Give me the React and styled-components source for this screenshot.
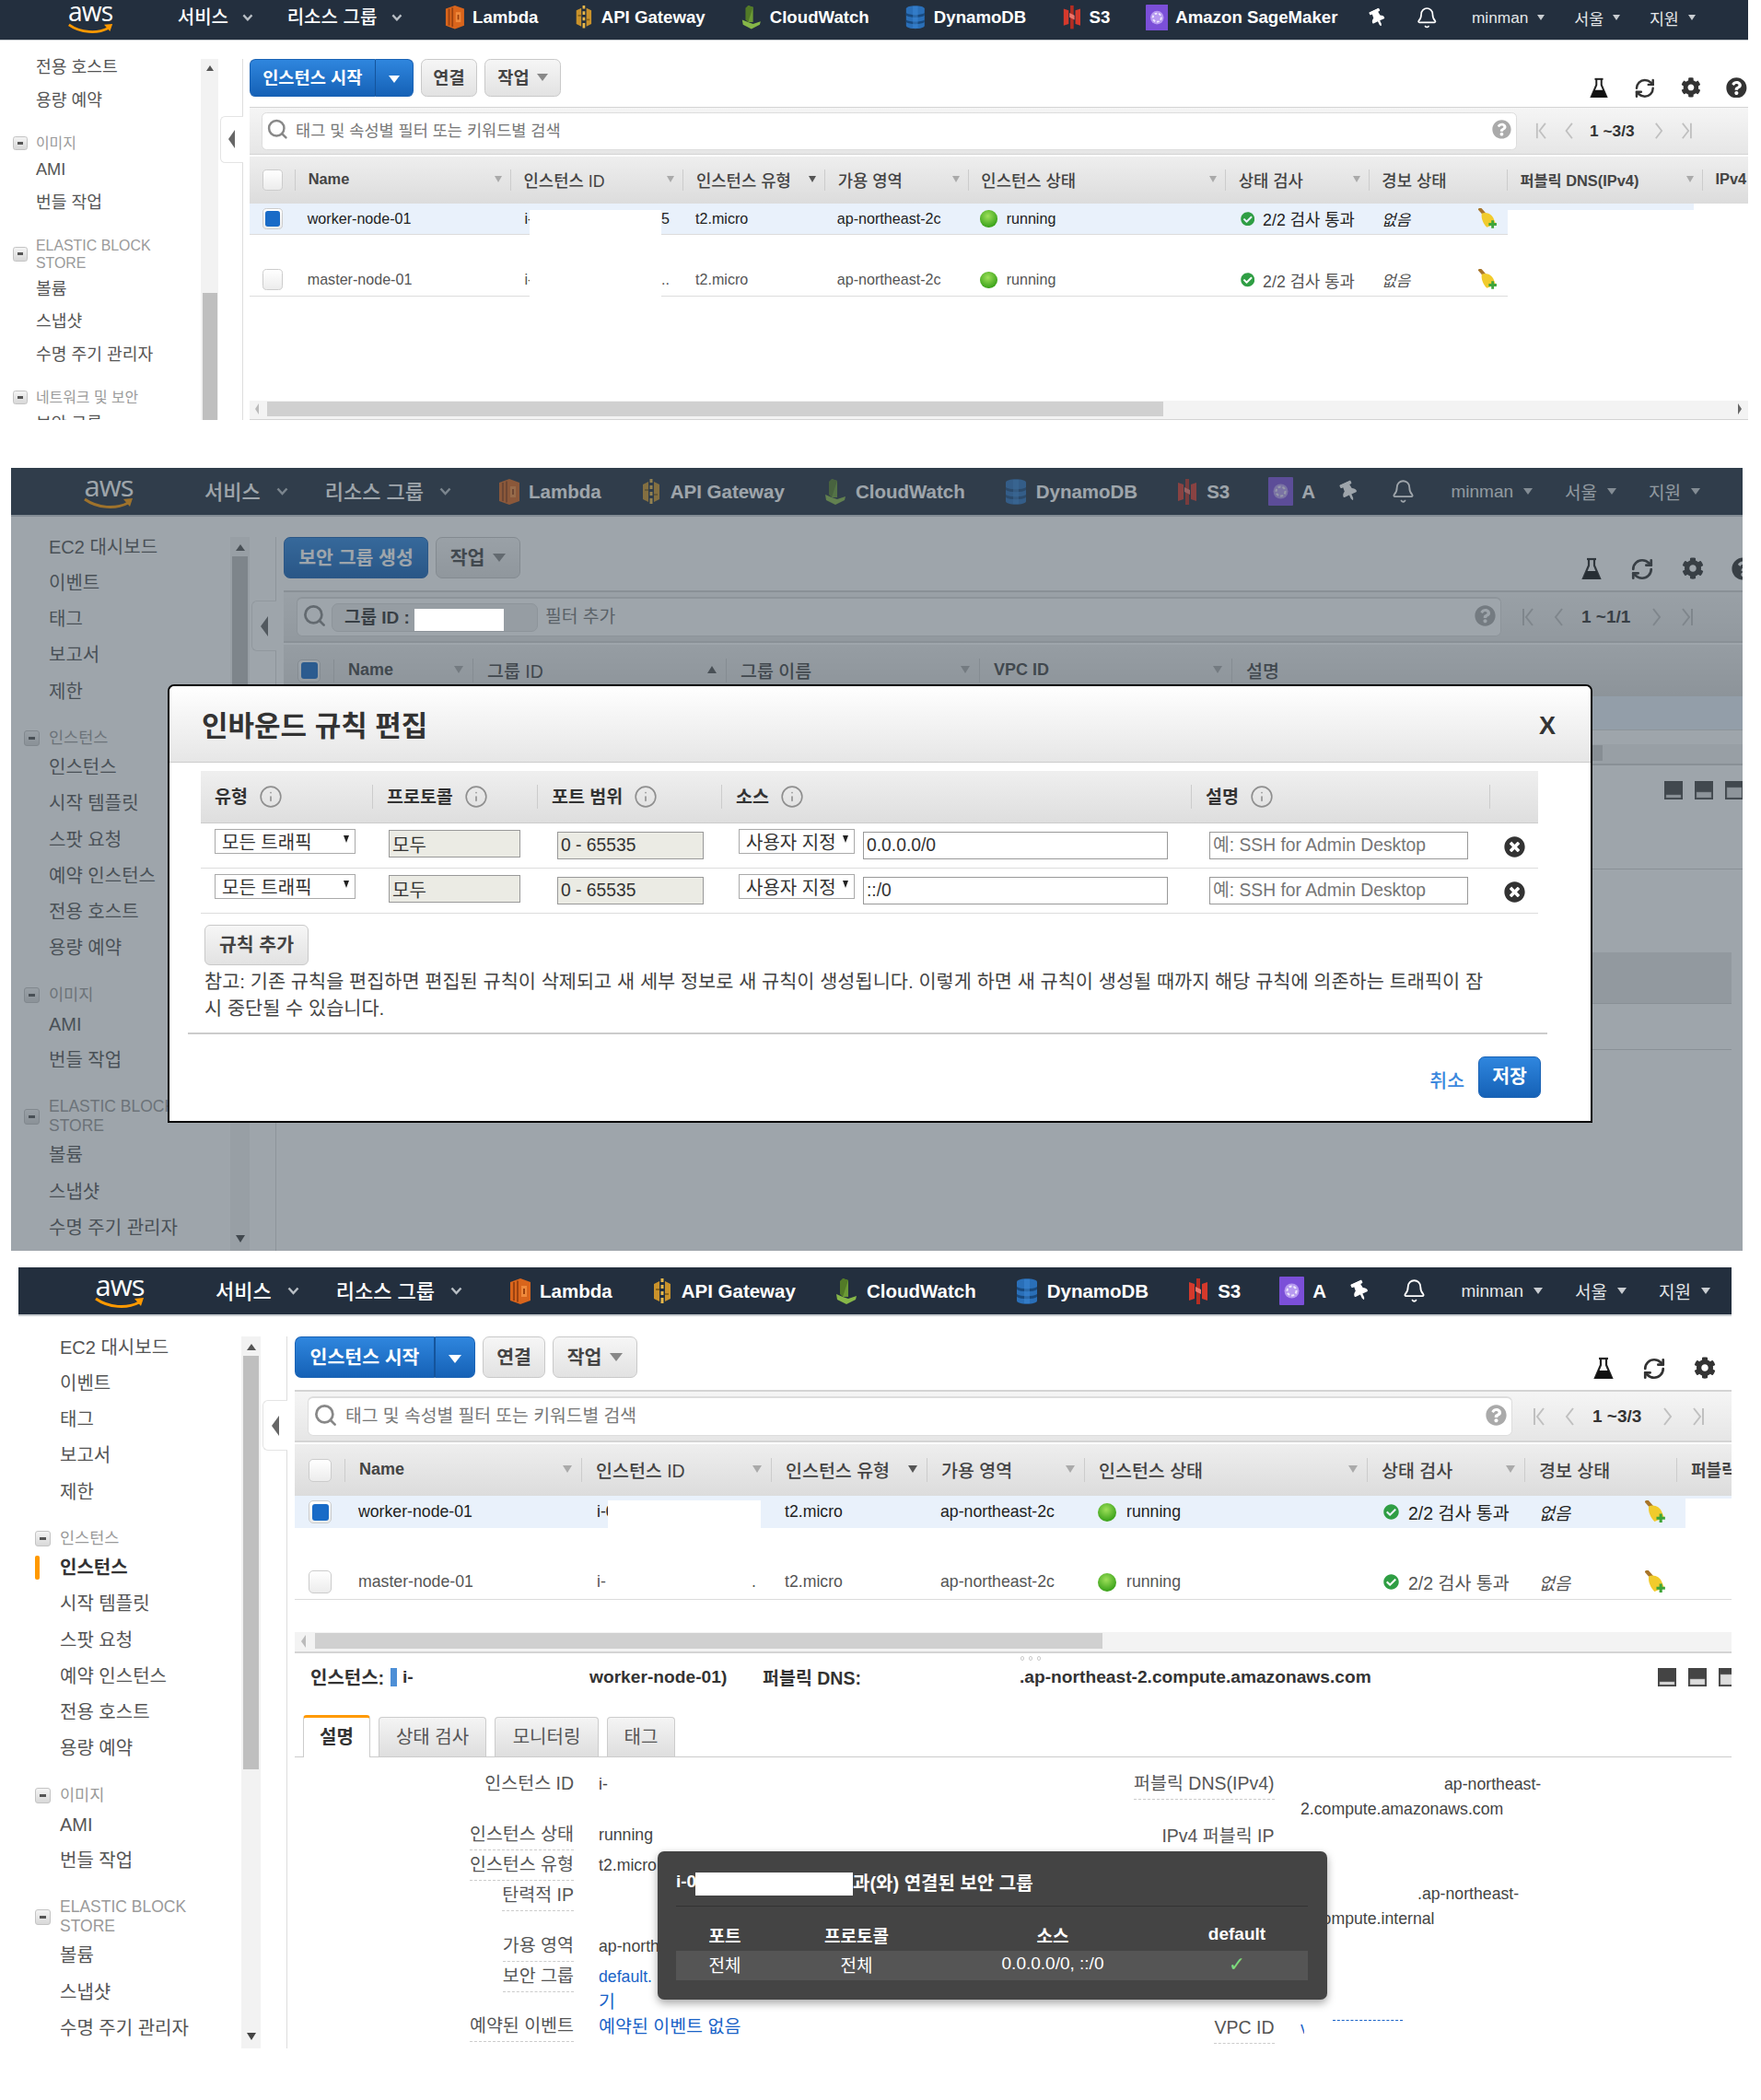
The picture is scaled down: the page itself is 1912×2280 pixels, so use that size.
import React from 'react'
import styled, { createGlobalStyle } from 'styled-components'
import { FaCog, FaQuestionCircle, FaCheckCircle, FaTimesCircle, FaThumbtack } from 'react-icons/fa'
import { Bell, RefreshCw, Search, Info } from 'lucide-react'

const Global = createGlobalStyle`
  html, body { margin: 0; padding: 0; background: #fff; overflow: hidden; }
  body { font-family: "Liberation Sans", "Noto Sans CJK KR", sans-serif; color: #444; }
  * { box-sizing: border-box; }
`

// one captured browser window; the reference stacks three of them
const Shot = styled.section`
  position: relative;
  overflow: hidden;
  width: ${p => p.$w}px;
  height: ${p => p.$h}px;
  margin: ${p => p.$top}px 0 0 ${p => p.$left}px;
`
const Screen = styled.div`
  position: relative;
  display: flex;
  flex-direction: column;
  zoom: ${p => p.$zoom || 1};
  width: ${p => p.$w}px;
  height: ${p => p.$h}px;
  margin-left: ${p => p.$shift || 0}px;
  background: #fff;
`

/* ---- top bar ---- */
const Bar = styled.header`
  display: flex;
  align-items: center;
  flex: none;
  height: 53px;
  margin-top: ${p => p.$crop || 0}px;
  padding: 0 ${p => p.$pad}px 0 82px;
  background: #232f3e;
  border-bottom: 2px solid #c9cdd1;
  color: #fff;
`
const Logo = styled.div`
  display: flex;
  flex-direction: column;
  align-items: center;
  width: 56px;
  margin-right: 76px;
  span { font: 400 31px/24px "Open Sans", sans-serif; letter-spacing: -1px; }
  svg { display: block; margin-top: 1px; }
`
const BarMenu = styled.div`
  display: flex;
  align-items: center;
  gap: 17px;
  margin-right: ${p => p.$gap}px;
  padding-bottom: 3px;
  font-size: 22px;
  font-weight: 500;
  white-space: nowrap;
  svg { margin-top: 3px; }
`
const Shortcut = styled.div`
  display: flex;
  align-items: center;
  gap: 9px;
  margin-right: ${p => p.$gap || 42}px;
  font-size: 20.500px;
  font-weight: 700;
  white-space: nowrap;
  svg { flex: none; }
`
const BarIcon = styled.div`
  display: flex;
  margin-right: ${p => p.$gap}px;
`
const BarRight = styled.div`
  display: flex;
  align-items: center;
  margin-left: auto;
  font-size: 19px;
  color: #e4e6e8;
  white-space: nowrap;
`
const BarDrop = styled.div`
  display: flex;
  align-items: center;
  gap: 11px;
  margin-left: ${p => p.$gap || 0}px;
  &::after {
    content: "";
    border: 5px solid transparent;
    border-top: 7px solid #c9cdd1;
    border-bottom: 0;
  }
`

const Chevron = () => (
  <svg width="13" height="9" viewBox="0 0 13 9"><path d="M1.5 1.5 6.5 7l5-5.500" fill="none" stroke="#b8bec4" strokeWidth="2.500" /></svg>
)
const LambdaIcon = () => (
  <svg width="24" height="30" viewBox="0 0 24 30"><path d="M12 1 23 5v20l-11 4-11-4V5z" fill="#d9651c" /><path d="M4 5h2v20H4zM8 3.500h2V26.500H8z" fill="#9c4210" /><path d="M13 9h6v12h-6z" fill="#f08a3c" /><path d="M15 12h2v6h-2z" fill="#9c4210" /></svg>
)
const GatewayIcon = () => (
  <svg width="24" height="30" viewBox="0 0 24 30"><path d="M3 7l6-3v22l-6-3zM21 7l-6-3v22l6-3z" fill="#c9922b" /><path d="M10.500 1h3v4h-3zM10.500 8h3v4h-3zM10.500 15h3v4h-3zM10.500 22h3v6h-3z" fill="#e8b84a" /><path d="M5 12h4v2H5zM15 17h4v2h-4z" fill="#8d6518" /></svg>
)
const WatchIcon = () => (
  <svg width="26" height="30" viewBox="0 0 26 30"><path d="M9 1l6 2v18H9z" fill="#6b9a35" /><path d="M9 21 2 18l1 6 10 5 10-5 1-4-9 3z" fill="#86b748" /><path d="M15 3l-6-2-3 3v14l3 3z" fill="#527a27" /></svg>
)
const DynamoIcon = () => (
  <svg width="26" height="30" viewBox="0 0 26 30"><path d="M2 5c0-5 22-5 22 0v20c0 5-22 5-22 0z" fill="#2a6fb8" /><path d="M2 10c4 3 18 3 22 0v3c-4 3-18 3-22 0zM2 18c4 3 18 3 22 0v3c-4 3-18 3-22 0z" fill="#18497e" /><path d="M13 2v26" stroke="#3d8ad8" strokeWidth="6" opacity=".5" /></svg>
)
const BucketIcon = () => (
  <svg width="24" height="30" viewBox="0 0 24 30"><path d="M2 5l6 2v16l-6 2zM22 5l-6 2v16l6 2z" fill="#d5392c" /><path d="M10 1h4v28h-4z" fill="#b52d22" /><path d="M9 10l6 3v5l-6-3z" fill="#f0756a" /></svg>
)
const SageIcon = () => (
  <svg width="27" height="31" viewBox="0 0 27 31"><rect width="27" height="31" rx="1" fill="#7b4fd8" /><circle cx="13.500" cy="15.500" r="8" fill="#b79af0" /><circle cx="13.500" cy="15.500" r="5" fill="none" stroke="#efe9fc" strokeWidth="2" strokeDasharray="3 2" /></svg>
)

const TopBar = ({ sage, pad, crop, sageGap }) => (
  <Bar $pad={pad} $crop={crop}>
    <Logo>
      <span>aws</span>
      <svg width="56" height="13" viewBox="0 0 56 13"><path d="M2 2c14 10 34 11 47 4" fill="none" stroke="#f90" strokeWidth="3" /><path d="M44 2l10-1-3 9z" fill="#f90" /></svg>
    </Logo>
    <BarMenu $gap={40}>서비스 <Chevron /></BarMenu>
    <BarMenu $gap={51}>리소스 그룹 <Chevron /></BarMenu>
    <Shortcut><LambdaIcon />Lambda</Shortcut>
    <Shortcut><GatewayIcon />API Gateway</Shortcut>
    <Shortcut><WatchIcon />CloudWatch</Shortcut>
    <Shortcut><DynamoIcon />DynamoDB</Shortcut>
    <Shortcut><BucketIcon />S3</Shortcut>
    <Shortcut $gap={sageGap}><SageIcon />{sage}</Shortcut>
    <BarIcon $gap={35}><FaThumbtack size={21} color="#fff" style={{ transform: 'rotate(-25deg)' }} /></BarIcon>
    <BarIcon $gap={0}><Bell size={27} color="#fff" strokeWidth={1.600} /></BarIcon>
    <BarRight>
      <BarDrop>minman</BarDrop>
      <BarDrop $gap={35}>서울</BarDrop>
      <BarDrop $gap={35}>지원</BarDrop>
    </BarRight>
  </Bar>
)

/* ---- left navigation ---- */
const Body = styled.div`
  display: flex;
  flex: 1;
  min-height: 0;
`
const SideList = styled.nav`
  flex: none;
  width: 242px;
  padding: ${p => p.$top}px 0 0 45px;
  overflow: hidden;
`
const SideItem = styled.div`
  position: relative;
  height: 39.300px;
  font-size: 20px;
  font-weight: ${p => (p.$active ? 700 : 400)};
  color: ${p => (p.$active ? '#333' : '#555')};
  line-height: 39px;
  white-space: nowrap;
  ${p => p.$active && `
    &::before {
      content: "";
      position: absolute;
      left: -27px;
      top: 6px;
      width: 5px;
      height: 26px;
      border-radius: 2px;
      background: #f90;
    }
  `}
`
const SideGroup = styled.div`
  display: flex;
  align-items: center;
  gap: 10px;
  margin: 20px 0 2px -27px;
  font-size: 17.500px;
  line-height: 21px;
  color: #9a9a9a;
`
const Minus = styled.span`
  display: flex;
  align-items: center;
  justify-content: center;
  flex: none;
  width: 17px;
  height: 17px;
  border: 1px solid #c4c4c4;
  border-radius: 3px;
  background: linear-gradient(#f4f4f4, #d8d8d8);
  &::before { content: ""; width: 7px; height: 3px; background: #555; }
`
const Track = styled.div`
  display: flex;
  flex-direction: column;
  flex: none;
  width: 21px;
  margin-top: 22px;
  overflow: hidden;
  background: #f2f2f2;
`
const TrackArrow = styled.div`
  flex: none;
  align-self: center;
  width: 0;
  margin: ${p => (p.$down ? 'auto 0 9px' : '8px 0 6px')};
  border: 5px solid transparent;
  ${p => (p.$down ? 'border-top: 8px solid #444; border-bottom: 0;' : 'border-bottom: 7px solid #555; border-top: 0;')}
`
const TrackThumb = styled.div`
  flex: none;
  height: ${p => p.$len}px;
  margin: ${p => p.$skip}px 2px 0;
  background: #bfbfbf;
`
const CollapseCol = styled.div`
  display: flex;
  justify-content: flex-end;
  flex: none;
  width: 29px;
  margin-top: 22px;
  border-right: 1px solid #ddd;
`
const CollapseTab = styled.div`
  display: flex;
  align-items: center;
  justify-content: center;
  width: 27px;
  height: 55px;
  margin: 69px -1px 0 0;
  background: #fff;
  border: 1px solid #e4e4e4;
  border-right: 0;
  border-radius: 6px 0 0 6px;
  &::before {
    content: "";
    border: 6px solid transparent;
    border-right: 8px solid #666;
    border-left: 0;
    border-top-width: 11px;
    border-bottom-width: 11px;
  }
`

const Sidebar = ({ items, top, skip, len }) => (
  <>
    <SideList $top={top}>
      {items.map(it => it.group
        ? <SideGroup key={it.group}><Minus /><span>{it.group.split('|').map(l => <div key={l}>{l}</div>)}</span></SideGroup>
        : <SideItem key={it.label} $active={it.active}>{it.label}</SideItem>)}
    </SideList>
    <Track>
      <TrackArrow />
      <TrackThumb $skip={skip} $len={len} />
      <TrackArrow $down />
    </Track>
    <CollapseCol><CollapseTab /></CollapseCol>
  </>
)

/* ---- main column ---- */
const Main = styled.main`
  position: relative;
  flex: 1;
  min-width: 0;
  margin-left: 8px;
  overflow: hidden;
`
const Toolbar = styled.div`
  display: flex;
  align-items: flex-start;
  gap: 8px;
  height: 45px;
  margin: 22px 0 13px;
`
const Btn = styled.button`
  display: flex;
  align-items: center;
  justify-content: center;
  gap: 9px;
  flex: none;
  width: ${p => p.$w}px;
  height: 45px;
  padding: 0 0 4px;
  border: 1px solid #c9c9c9;
  border-radius: 7px;
  background: linear-gradient(#f6f6f6, #e2e2e2);
  color: #444;
  font: 700 20.500px "Liberation Sans", "Noto Sans CJK KR", sans-serif;
`
const BlueBtn = styled(Btn)`
  border-color: #1a62b4;
  background: linear-gradient(#2f86de, #1561b6);
  color: #fff;
  ${p => p.$left && 'border-radius: 7px 0 0 7px; border-right: 0;'}
  ${p => p.$right && 'border-radius: 0 7px 7px 0; margin-left: -8px; border-left: 2px solid #14549c; padding: 0;'}
`
const DownTri = styled.i`
  margin-top: 4px;
  border: 7px solid transparent;
  border-top: 9px solid ${p => p.$c || '#fff'};
  border-bottom: 0;
`
const ToolIcons = styled.div`
  display: flex;
  margin: 22px ${p => p.$right}px 0 auto;
`
const ToolIcon = styled.div`
  display: flex;
  justify-content: center;
  width: 55px;
  color: #333;
`
const FilterBar = styled.div`
  display: flex;
  height: 57px;
  padding: 5px 0 5px 14px;
  background: linear-gradient(#f5f5f5, #e6e6e6);
  border-top: 2px solid #d4d4d4;
  border-bottom: 2px solid #d4d4d4;
`
const FilterInput = styled.div`
  position: relative;
  display: flex;
  align-items: center;
  flex: 1;
  min-width: 0;
  padding: 0 5px 4px;
  border: 1px solid #ddd;
  border-top: 2px solid #ddd;
  border-radius: 6px;
  background: #fff;
  font-size: 19.300px;
  color: #777;
  white-space: nowrap;
`
const Chip = styled.span`
  display: flex;
  align-items: center;
  gap: 5px;
  width: 224px;
  height: 31px;
  margin: 4px 8px 0 -3px;
  padding: 0 0 4px 13px;
  border-radius: 7px;
  border: 1px solid #ddd;
  background: #eee;
  color: #333;
  font-size: 19px;
  font-weight: 700;
`
const HelpBubble = styled.span`
  display: flex;
  margin-left: auto;
  color: #aaa;
`
const Pager = styled.div`
  display: flex;
  align-items: center;
  flex: none;
  gap: 18px;
  width: ${p => p.$w}px;
  padding-left: 22px;
  font-size: 19px;
  font-weight: 700;
  color: #333;
  white-space: nowrap;
  span { margin: 0 5px 0 1px; }
`
const Page = ({ back, end }) => (
  <svg width="14" height="22" viewBox="0 0 14 22" style={back ? undefined : { transform: 'scaleX(-1)' }}>
    <path d="M12 2 5 11l7 9" fill="none" stroke="#c0c0c0" strokeWidth="2" />
    {end && <path d="M2 2v18" stroke="#c0c0c0" strokeWidth="2" />}
  </svg>
)

const HeadRow = styled.div`
  display: flex;
  align-items: center;
  height: 56px;
  margin-top: 2px;
  background: linear-gradient(#eee, #dcdcdc);
  color: #444;
  white-space: nowrap;
`
const Th = styled.div`
  display: flex;
  align-items: center;
  justify-content: space-between;
  flex: none;
  width: ${p => p.$w}px;
  height: 26px;
  padding: 0 10px 2px 15px;
  border-right: ${p => (p.$bare ? 0 : '1px solid #ccc')};
  span {
    font-size: ${p => (p.$latin ? 18 : 19.5)}px;
    font-weight: ${p => (p.$latin ? 700 : 500)};
  }
`
const CheckCol = styled.div`
  flex: none;
  width: 55px;
  ${p => p.$line && 'border-right: 1px solid #ccc;'}
`
const Sort = styled.i`
  border: 5px solid transparent;
  ${p => (p.$up ? 'border-bottom: 8px solid #555; border-top: 0;' : `border-top: 8px solid ${p.$dark ? '#555' : '#aaa'}; border-bottom: 0;`)}
`
const Check = styled.div`
  display: flex;
  align-items: center;
  justify-content: center;
  flex: none;
  width: 25px;
  height: 25px;
  margin-left: 15px;
  border: 1px solid #ccc;
  border-radius: 5px;
  background: linear-gradient(#fff, #ececec);
  ${p => p.$on && `&::before { content: ""; width: 18px; height: 18px; border-radius: 3px; background: #196bc7; }`}
`
const Rows = styled.div`position: relative;`
const Row = styled.div`
  display: flex;
  align-items: center;
  width: ${p => p.$w || '100%'};
  height: ${p => p.$h}px;
  font-size: 17.700px;
  color: ${p => p.$c || '#222'};
  white-space: nowrap;
  ${p => p.$on && 'background: #e9f1fb;'}
  ${p => p.$line && 'border-bottom: 1px solid #dcdcdc;'}
  ${p => p.$low && `padding-top: ${p.$low}px;`}
`
const Td = styled.div`
  display: flex;
  align-items: center;
  flex: none;
  width: ${p => p.$w}px;
  padding: 0 ${p => (p.$r === undefined ? 15 : p.$r)}px 0 ${p => p.$l || 14}px;
  gap: ${p => p.$gap || 0}px;
`
const Tail = styled.span`margin-left: auto;`
const CheckText = styled.span`font-size: 19.500px;`
const NoneText = styled.em`font-size: 18.500px;`
const Orb = styled.i`
  flex: none;
  width: 20px;
  height: 20px;
  margin: 0 11px 0 0;
  border-radius: 50%;
  background: radial-gradient(circle at 45% 35%, #9ee05a, #3fa51d 70%);
`
const BroomSvg = styled.svg`margin-left: auto;`
const Broom = () => (
  <BroomSvg width="25" height="25" viewBox="0 0 24 24">
    <path d="M1 0 8 8" stroke="#a8752a" strokeWidth="4" />
    <path d="M4 6c6-2 12 1 14 7l2 5-10 4c-4-4-7-10-6-16z" fill="#f1cb2c" />
    <path d="M15 14h3v3h3v3h-3v3h-3v-3h-3v-3h3z" fill="#3fa53a" />
  </BroomSvg>
)
const Redact = styled.div`
  position: absolute;
  left: ${p => p.$l}px;
  top: ${p => p.$t}px;
  width: ${p => p.$w}px;
  height: ${p => p.$h}px;
  background: #fff;
`
const Scroll = styled.div`
  display: flex;
  align-items: center;
  height: 23px;
  margin-top: ${p => p.$gap}px;
  padding-bottom: 2px;
  background: #f3f3f3;
  border-bottom: 2px solid #d4d4d4;
`
const ScrollArrow = styled.i`
  flex: none;
  margin: ${p => (p.$right ? '0 8px 0 auto' : '0 10px 0 7px')};
  border: 4px solid transparent;
  border-top-width: 7px;
  border-bottom-width: 7px;
  ${p => (p.$right ? 'border-left: 5px solid #666; border-right: 0;' : 'border-right: 5px solid #bbb; border-left: 0;')}
`
const ScrollThumb = styled.div`
  flex: none;
  width: ${p => p.$w}px;
  height: 17px;
  background: #d0d0d0;
`
const InfoBar = styled.div`
  position: relative;
  display: flex;
  align-items: center;
  height: ${p => p.$h || 54}px;
  margin-bottom: ${p => (p.$h ? 0 : 14)}px;
  padding: 0 0 3px 17px;
  font-weight: 700;
  color: #333;
  white-space: nowrap;
`
const InfoCell = styled.span`
  flex: none;
  width: ${p => p.$w}px;
  font-size: ${p => p.$size || 19.200}px;
`
const InfoMark = styled.i`
  flex: none;
  width: 7px;
  height: 20px;
  margin-right: 6px;
  background: #4d8fd6;
`
const Grip = styled.div`
  position: absolute;
  left: 788px;
  top: 3px;
  display: flex;
  gap: 5px;
  i { width: 4px; height: 5px; border: 1px solid #ccc; border-radius: 2px; }
`
const PaneIcons = styled.div`
  display: flex;
  gap: 13px;
  margin: 0 ${p => p.$right}px 0 auto;
`
const Pane = ({ fill }) => (
  <svg width="20" height="20" viewBox="0 0 20 20"><rect width="20" height="20" fill="#444" /><rect x="2" y={18 - fill} width="16" height={fill} fill="#ddd" stroke="#999" strokeWidth=".5" /></svg>
)

const Tabs = styled.div`
  display: flex;
  align-items: flex-end;
  gap: 9px;
  height: 45px;
  padding-left: 9px;
  border-bottom: 1px solid #ccc;
`
const Tab = styled.div`
  display: flex;
  align-items: center;
  justify-content: center;
  width: ${p => p.$w}px;
  height: ${p => (p.$on ? 46 : 43)}px;
  padding-bottom: 4px;
  border: 1px solid #ccc;
  border-bottom: 0;
  border-radius: 4px 4px 0 0;
  font-size: 20px;
  color: ${p => (p.$on ? '#333' : '#555')};
  font-weight: ${p => (p.$on ? 700 : 400)};
  background: ${p => (p.$on ? '#fff' : 'linear-gradient(#f4f4f4, #dedede)')};
  margin-bottom: ${p => (p.$on ? -1 : 0)}px;
  ${p => p.$on && 'border-top: 3px solid #f90;'}
`
const Detail = styled.div`
  position: relative;
  display: grid;
  grid-template-columns: 760px 1fr;
  padding-top: 13px;
`
const DetailRow = styled.div`
  display: grid;
  grid-template-columns: ${p => p.$label}px 1fr;
  column-gap: ${p => p.$gap}px;
  margin-top: ${p => p.$mt || 0}px;
  min-height: 32px;
`
const DtWrap = styled.div`
  display: flex;
  justify-content: flex-end;
  align-items: flex-start;
`
const Dt = styled.div`
  height: 33px;
  font-size: 19.500px;
  line-height: 31px;
  color: #555;
  white-space: nowrap;
  ${p => p.$dash && 'border-bottom: 1px dashed #ccc;'}
`
const Dd = styled.div`
  padding-top: 3px;
  font-size: 17.700px;
  line-height: 27px;
  color: #444;
  white-space: nowrap;
`
const DdLine = styled.div`
  padding-left: ${p => p.$pad || 0}px;
  height: ${p => p.$h || 27}px;
  ${p => p.$link && 'color: #1a63c7;'}
  ${p => p.$big && 'font-size: 19.500px;'}
`
const CutValue = styled.div`
  display: flex;
  align-items: flex-start;
  gap: 31px;
  height: 27px;
  overflow: hidden;
  color: #1a63c7;
  span { display: block; width: 4px; overflow: hidden; }
  i { display: block; width: 76px; margin-top: 4px; border-top: 1px dashed #1a63c7; }
`

/* ---- dark hover card ---- */
const Card = styled.aside`
  position: absolute;
  left: 394px;
  top: 102px;
  width: 727px;
  height: 161px;
  padding: 23px 21px 0 20px;
  border-radius: 7px;
  background: #444;
  color: #fff;
  box-shadow: 0 4px 10px rgba(0, 0, 0, .35);
`
const CardTitle = styled.div`
  display: flex;
  align-items: center;
  height: 25px;
  padding-bottom: 5px;
  font-size: 20px;
  font-weight: 700;
  white-space: nowrap;
`
const CardLead = styled.span`
  width: 21px;
  overflow: hidden;
  font-size: 19px;
`
const CardGap = styled.i`
  width: 171px;
  height: 25px;
  margin: 5px 0 0;
  background: #fff;
`
const CardRow = styled.div`
  display: grid;
  grid-template-columns: 106px 180px 246px 1fr;
  align-items: center;
  height: ${p => p.$h}px;
  margin-top: ${p => p.$mt || 0}px;
  text-align: center;
  font-size: 19px;
  font-weight: ${p => (p.$head ? 700 : 400)};
  ${p => p.$head && 'border-top: 1px solid #333; padding-top: 12px;'}
  ${p => p.$row && 'background: #555; padding-bottom: 4px;'}
`
const Tick = styled.span`
  color: #7fdc7f;
  font-family: "DejaVu Sans", sans-serif;
  font-size: 22px;
`

/* ---- dimmer and edit dialog ---- */
const Dim = styled.div`
  position: absolute;
  inset: 0;
  background: rgba(62, 75, 88, .5);
`
const BlankBand = styled.div`
  height: ${p => p.$h}px;
  margin-top: ${p => p.$mt}px;
  background: ${p => p.$bg || 'transparent'};
  width: ${p => p.$w || '100%'};
  ${p => p.$line && 'border-bottom: 1px solid #d4d4d4;'}
`
const Dialog = styled.div`
  position: absolute;
  left: 174px;
  top: 235px;
  width: 1547px;
  height: 476px;
  background: #fff;
  border: 2px solid #000;
  border-radius: 7px 7px 0 0;
`
const DialogHead = styled.div`
  display: flex;
  align-items: center;
  justify-content: space-between;
  height: 83px;
  padding: 0 38px 0 35px;
  border-bottom: 1px solid #ccc;
  border-radius: 6px 6px 0 0;
  background: linear-gradient(#fff, #e6e6e6);
`
const DialogTitle = styled.h2`
  margin: 0;
  padding-bottom: 2px;
  font-size: 31px;
  font-weight: 700;
  color: #333;
`
const CloseX = styled.span`
  padding-top: 5px;
  font: 700 27px "Liberation Sans", sans-serif;
  color: #333;
`
const RuleHead = styled.div`
  display: flex;
  align-items: center;
  height: 57px;
  margin: 9px 57px 0 34px;
  background: linear-gradient(#efefef, #dedede);
  border-bottom: 1px solid #ccc;
`
const RuleTh = styled.div`
  display: flex;
  align-items: center;
  gap: 12px;
  flex: none;
  width: ${p => p.$w}px;
  height: 26px;
  padding: 0 0 4px 15px;
  border-right: 1px solid #ccc;
  font-size: 19.500px;
  font-weight: 700;
  color: #333;
  svg { margin-top: 4px; }
`
const RuleRow = styled.div`
  display: flex;
  height: 49px;
  margin: 0 57px 0 34px;
  border-bottom: 1px solid #ddd;
`
const RuleTd = styled.div`
  display: flex;
  gap: 9px;
  flex: none;
  width: ${p => p.$w}px;
  padding: ${p => p.$top}px 0 0 ${p => p.$left}px;
`
const SourceWrap = styled.div`padding-top: 3px;`
const FakeSelect = styled.div`
  display: flex;
  align-items: center;
  justify-content: space-between;
  overflow: hidden;
  flex: none;
  width: ${p => p.$w}px;
  height: 27px;
  padding: 0 6px 0 7px;
  border: 1px solid #aaa;
  background: #fff;
  font-size: 20px;
  color: #333;
  white-space: nowrap;
  i { flex: none; margin-top: -6px; border: 3.500px solid transparent; border-top: 8px solid #222; border-bottom: 0; }
`
const Field = styled.input`
  flex: none;
  width: ${p => p.$w}px;
  height: 30px;
  padding: 0 3px;
  border: 1px solid #999;
  border-radius: 0;
  background: ${p => (p.$off ? '#ebebe4' : '#fff')};
  font: 400 ${p => p.$size || 19.300}px "Liberation Sans", "Noto Sans CJK KR", sans-serif;
  color: #333;
  &::placeholder { color: #757575; opacity: 1; }
`
const DialogBtn = styled(Btn)`
  height: 44px;
  margin: 12px 0 0 38px;
  border-radius: 6px;
`
const Note = styled.p`
  margin: 4px 0 0 38px;
  font-size: 20.800px;
  line-height: 28.500px;
  color: #444;
  white-space: nowrap;
`
const DialogRule = styled.div`
  height: 2px;
  margin: 12px 47px 0 20px;
  background: #ccc;
`
const DialogFoot = styled.div`
  display: flex;
  align-items: center;
  justify-content: flex-end;
  gap: 15px;
  margin: 24px 54px 0 0;
`
const CancelLink = styled.a`
  margin: 5px 0 0;
  font-size: 20.500px;
  font-weight: 500;
  color: #3b87dd;
`
const SaveBtn = styled(BlueBtn)`
  padding-bottom: 6px;
`

const ruleWidths = [187, 179, 200, 510, 324, 53]

const RuleLine = ({ source }) => (
  <RuleRow>
    <RuleTd $w={ruleWidths[0]} $top={6} $left={15}><FakeSelect $w={153}>모든 트래픽<i /></FakeSelect></RuleTd>
    <RuleTd $w={ruleWidths[1]} $top={7} $left={17}><Field $w={143} $off $size={20} readOnly value="모두" /></RuleTd>
    <RuleTd $w={ruleWidths[2]} $top={9} $left={21}><Field $w={159} $off readOnly value="0 - 65535" /></RuleTd>
    <RuleTd $w={ruleWidths[3]} $top={6} $left={18}>
      <FakeSelect $w={126}>사용자 지정<i /></FakeSelect>
      <SourceWrap><Field $w={331} readOnly value={source} /></SourceWrap>
    </RuleTd>
    <RuleTd $w={ruleWidths[4]} $top={9} $left={19}><Field $w={281} placeholder="예: SSH for Admin Desktop" /></RuleTd>
    <RuleTd $w={ruleWidths[5]} $top={14} $left={15}><FaTimesCircle size={23} color="#333" /></RuleTd>
  </RuleRow>
)

const EditDialog = () => (
  <Dialog>
    <DialogHead>
      <DialogTitle>인바운드 규칙 편집</DialogTitle>
      <CloseX>X</CloseX>
    </DialogHead>
    <RuleHead>
      {['유형', '프로토콜', '포트 범위', '소스', '설명'].map((t, i) => (
        <RuleTh key={t} $w={ruleWidths[i]}>{t} <Info size={26} color="#8f8f8f" strokeWidth={1.500} /></RuleTh>
      ))}
    </RuleHead>
    <RuleLine source="0.0.0.0/0" />
    <RuleLine source="::/0" />
    <DialogBtn $w={113}>규칙 추가</DialogBtn>
    <Note>
      참고: 기존 규칙을 편집하면 편집된 규칙이 삭제되고 새 세부 정보로 새 규칙이 생성됩니다. 이렇게 하면 새 규칙이 생성될 때까지 해당 규칙에 의존하는 트래픽이 잠<br />
      시 중단될 수 있습니다.
    </Note>
    <DialogRule />
    <DialogFoot>
      <CancelLink>취소</CancelLink>
      <SaveBtn $w={68}>저장</SaveBtn>
    </DialogFoot>
  </Dialog>
)

/* ---- data ---- */
const item = label => ({ label })
const group = name => ({ group: name })
const fullNav = [
  item('EC2 대시보드'), item('이벤트'), item('태그'), item('보고서'), item('제한'),
  group('인스턴스'), { label: '인스턴스', active: true }, item('시작 템플릿'), item('스팟 요청'), item('예약 인스턴스'), item('전용 호스트'), item('용량 예약'),
  group('이미지'), item('AMI'), item('번들 작업'),
  group('ELASTIC BLOCK|STORE'), item('볼륨'), item('스냅샷'), item('수명 주기 관리자'),
]
const dimNav = fullNav.map(n => (n.active ? { label: n.label } : n))
const topNav = [
  item('전용 호스트'), item('용량 예약'),
  group('이미지'), item('AMI'), item('번들 작업'),
  group('ELASTIC BLOCK|STORE'), item('볼륨'), item('스냅샷'), item('수명 주기 관리자'),
  group('네트워크 및 보안'), item('보안 그룹'),
]

const instCols = [
  { w: 257, t: 'Name', latin: true, sort: true },
  { w: 206, t: '인스턴스 ID', sort: true },
  { w: 169, t: '인스턴스 유형', sort: true, dark: true },
  { w: 171, t: '가용 영역', sort: true },
  { w: 307, t: '인스턴스 상태', sort: true },
  { w: 171, t: '상태 검사', sort: true },
  { w: 165, t: '경보 상태' },
  { w: 233, t: '퍼블릭 DNS(IPv4)', latin: true, sort: true },
  { w: 220, t: 'IPv4', latin: true, bare: true },
]
const groupCols = [
  { w: 151, t: 'Name', latin: true, sort: true },
  { w: 275, t: '그룹 ID', up: true },
  { w: 275, t: '그룹 이름', sort: true },
  { w: 274, t: 'VPC ID', latin: true, sort: true },
  { w: 300, t: '설명', bare: true },
]

const Head = ({ cols, on }) => (
  <HeadRow>
    <CheckCol $line><Check $on={on} /></CheckCol>
    {cols.map(c => (
      <Th key={c.t} $w={c.w} $latin={c.latin} $bare={c.bare}>
        <span>{c.t}</span>
        {c.sort && <Sort $dark={c.dark} />}
        {c.up && <Sort $up />}
      </Th>
    ))}
  </HeadRow>
)

const InstanceCells = ({ name, id, tail, on }) => (
  <>
    <CheckCol><Check $on={on} /></CheckCol>
    <Td $w={257}>{name}</Td>
    <Td $w={206} $l={16} $r={17}>{id}{tail && <Tail>{tail}</Tail>}</Td>
    <Td $w={169}>t2.micro</Td>
    <Td $w={171}>ap-northeast-2c</Td>
    <Td $w={307}><Orb />running</Td>
    <Td $w={171} $l={17} $r={0} $gap={10}><FaCheckCircle size={17} color="#2f9e44" /><CheckText>2/2 검사 통과</CheckText></Td>
    <Td $w={165} $l={15} $r={10}><NoneText>없음</NoneText><Broom /></Td>
  </>
)

const Flask = () => (
  <svg width="22" height="25" viewBox="0 0 22 25"><path d="M8 2v7L2 23h18L14 9V2" fill="none" stroke="#222" strokeWidth="2.200" /><path d="M6 2h10" stroke="#222" strokeWidth="2.200" /><path d="M5.500 15h11l3.500 8.500H2z" fill="#111" /></svg>
)
const RightTools = ({ right }) => (
  <ToolIcons $right={right}>
    <ToolIcon><Flask /></ToolIcon>
    <ToolIcon><RefreshCw size={26} strokeWidth={2.500} color="#333" /></ToolIcon>
    <ToolIcon><FaCog size={24} color="#333" /></ToolIcon>
    <ToolIcon><FaQuestionCircle size={25} color="#333" /></ToolIcon>
  </ToolIcons>
)
const PagerRow = ({ w, text }) => (
  <Pager $w={w}>
    <Page back end /><Page back /><span>{text}</span><Page /><Page end />
  </Pager>
)
const SearchGlass = styled(Search)`
  flex: none;
  margin-right: 8px;
`
const SearchInner = ({ children }) => (
  <FilterInput>
    <SearchGlass size={27} strokeWidth={2.400} color="#888" />
    {children}
    <HelpBubble><FaQuestionCircle size={23} /></HelpBubble>
  </FilterInput>
)
const PaneBar = ({ right }) => (
  <PaneIcons $right={right}><Pane fill={3} /><Pane fill={6} /><Pane fill={11} /></PaneIcons>
)

/* ---- the three captures ---- */
const InstancesTop = () => (
  <Shot $w={1898} $h={456} $top={0} $left={0}>
    <Screen $zoom={0.91} $w={2088} $h={520} $shift={-2.200}>
      <TopBar sage="Amazon SageMaker" pad={63} crop={-5} sageGap={37} />
      <Body>
        <Sidebar items={topNav} top={14} skip={259} len={300} />
        <Main>
          <Toolbar>
            <BlueBtn $w={149} $left>인스턴스 시작</BlueBtn>
            <BlueBtn $w={47} $right><DownTri /></BlueBtn>
            <Btn $w={68}>연결</Btn>
            <Btn $w={92}>작업 <DownTri $c="#888" /></Btn>
            <RightTools right={-14} />
          </Toolbar>
          <FilterBar>
            <SearchInner>태그 및 속성별 필터 또는 키워드별 검색</SearchInner>
            <PagerRow w={276} text="1 ~3/3" />
          </FilterBar>
          <Head cols={instCols} />
          <Rows>
            <Row $h={37} $on $line $w="1723px"><InstanceCells name="worker-node-01" id="i-" tail="5" on /></Row>
            <Row $h={74} $line $w="1501px" $low={35} $c="#555"><InstanceCells name="master-node-01" id="i-" tail=".." /></Row>
            <Redact $l={1501} $t={8} $w={222} $h={30} />
            <Redact $l={334} $t={8} $w={157} $h={106} />
          </Rows>
          <Scroll $gap={124}>
            <ScrollArrow />
            <ScrollThumb $w={1069} />
            <ScrollArrow $right />
          </Scroll>
        </Main>
      </Body>
    </Screen>
  </Shot>
)

const SecurityGroups = () => (
  <Shot $w={1880} $h={850} $top={52} $left={12}>
    <Screen $w={1884} $h={850} $shift={-4}>
      <TopBar sage="A" pad={46} sageGap={26} />
      <Body>
        <Sidebar items={dimNav} top={13.500} skip={0} len={449} />
        <Main>
          <Toolbar>
            <BlueBtn $w={157}>보안 그룹 생성</BlueBtn>
            <Btn $w={92}>작업 <DownTri $c="#888" /></Btn>
            <RightTools right={-28} />
          </Toolbar>
          <FilterBar>
            <SearchInner>
              <Chip>그룹 ID :</Chip>
              필터 추가
            </SearchInner>
            <PagerRow w={262} text="1 ~1/1" />
          </FilterBar>
          <Head cols={groupCols} on />
          <Row $h={37} $on $line />
          <Scroll $gap={15}>
            <ScrollArrow />
            <ScrollThumb $w={1410} />
          </Scroll>
          <InfoBar $h={56}><PaneBar right={-1} /></InfoBar>
          <BlankBand $mt={0} $h={57} $line />
          <BlankBand $mt={90} $h={56} $w="1572px" $bg="#e6e6e6" $line />
          <BlankBand $mt={49} $h={1} $w="1572px" $bg="#d4d4d4" />
        </Main>
      </Body>
      <Dim />
      <Redact $l={442} $t={153} $w={97} $h={24} />
      <EditDialog />
    </Screen>
  </Shot>
)

const InstancesDetail = () => (
  <Shot $w={1860} $h={848} $top={18} $left={20}>
    <Screen $w={1860} $h={848}>
      <TopBar sage="A" pad={23} sageGap={26} />
      <Body>
        <Sidebar items={fullNav} top={14.500} skip={0} len={449} />
        <Main>
          <Toolbar>
            <BlueBtn $w={151} $left>인스턴스 시작</BlueBtn>
            <BlueBtn $w={45} $right><DownTri /></BlueBtn>
            <Btn $w={68}>연결</Btn>
            <Btn $w={92}>작업 <DownTri $c="#888" /></Btn>
            <RightTools right={-53} />
          </Toolbar>
          <FilterBar>
            <SearchInner>태그 및 속성별 필터 또는 키워드별 검색</SearchInner>
            <PagerRow w={238} text="1 ~3/3" />
          </FilterBar>
          <Head cols={instCols} />
          <Rows>
            <Row $h={35} $on><InstanceCells name="worker-node-01" id="i-0" on /></Row>
            <Row $h={78} $line $low={40} $c="#555"><InstanceCells name="master-node-01" id="i-" tail="." /></Row>
            <Redact $l={1510} $t={3} $w={60} $h={32} />
            <Redact $l={340} $t={5} $w={166} $h={30} />
          </Rows>
          <Scroll $gap={35}>
            <ScrollArrow />
            <ScrollThumb $w={855} />
          </Scroll>
          <InfoBar>
            <Grip><i /><i /><i /></Grip>
            <InfoCell $w={87} $size={20}>인스턴스:</InfoCell>
            <InfoMark />
            <InfoCell $w={203}>i-</InfoCell>
            <InfoCell $w={188}>worker-node-01)</InfoCell>
            <InfoCell $w={279} $size={19.500}>퍼블릭 DNS:</InfoCell>
            <InfoCell $w={300}>.ap-northeast-2.compute.amazonaws.com</InfoCell>
            <PaneBar right={-6} />
          </InfoBar>
          <Tabs>
            <Tab $on $w={73}>설명</Tab>
            <Tab $w={117}>상태 검사</Tab>
            <Tab $w={113}>모니터링</Tab>
            <Tab $w={74}>태그</Tab>
          </Tabs>
          <Detail>
            <div>
              <DetailRow $label={303} $gap={27}><DtWrap><Dt>인스턴스 ID</Dt></DtWrap><Dd><DdLine>i-</DdLine></Dd></DetailRow>
              <DetailRow $label={303} $gap={27} $mt={22}><DtWrap><Dt $dash>인스턴스 상태</Dt></DtWrap><Dd><DdLine>running</DdLine></Dd></DetailRow>
              <DetailRow $label={303} $gap={27}><DtWrap><Dt $dash>인스턴스 유형</Dt></DtWrap><Dd><DdLine>t2.micro</DdLine></Dd></DetailRow>
              <DetailRow $label={303} $gap={27}><DtWrap><Dt $dash>탄력적 IP</Dt></DtWrap><Dd /></DetailRow>
              <DetailRow $label={303} $gap={27} $mt={22}><DtWrap><Dt $dash>가용 영역</Dt></DtWrap><Dd><DdLine>ap-northeast-2c</DdLine></Dd></DetailRow>
              <DetailRow $label={303} $gap={27}><DtWrap><Dt $dash>보안 그룹</Dt></DtWrap><Dd><DdLine $link>default.</DdLine><DdLine $link $big $h={24}>기</DdLine></Dd></DetailRow>
              <DetailRow $label={303} $gap={27}><DtWrap><Dt $dash>예약된 이벤트</Dt></DtWrap><Dd><DdLine $link $big>예약된 이벤트 없음</DdLine></Dd></DetailRow>
            </div>
            <div>
              <DetailRow $label={303.500} $gap={28.500}><DtWrap><Dt $dash>퍼블릭 DNS(IPv4)</Dt></DtWrap><Dd><DdLine $pad={156}>ap-northeast-</DdLine><DdLine>2.compute.amazonaws.com</DdLine></Dd></DetailRow>
              <DetailRow $label={303.500} $gap={28.500}><DtWrap><Dt>IPv4 퍼블릭 IP</Dt></DtWrap><Dd /></DetailRow>
              <DetailRow $label={303.500} $gap={28.500} $mt={29}><DtWrap /><Dd><DdLine $pad={127}>.ap-northeast-</DdLine><DdLine>2.compute.internal</DdLine></Dd></DetailRow>
              <DetailRow $label={303.500} $gap={28.500} $mt={89}><DtWrap><Dt $dash>VPC ID</Dt></DtWrap><Dd><CutValue><span>v</span><i /></CutValue></Dd></DetailRow>
            </div>
            <Card>
              <CardTitle><CardLead>i-0</CardLead><CardGap />과(와) 연결된 보안 그룹</CardTitle>
              <CardRow $head $h={49} $mt={11}><span>포트</span><span>프로토콜</span><span>소스</span><span>default</span></CardRow>
              <CardRow $row $h={32}><span>전체</span><span>전체</span><span>0.0.0.0/0, ::/0</span><Tick>✓</Tick></CardRow>
            </Card>
          </Detail>
        </Main>
      </Body>
    </Screen>
  </Shot>
)

export default function App() {
  return (
    <>
      <Global />
      <InstancesTop />
      <SecurityGroups />
      <InstancesDetail />
    </>
  )
}
